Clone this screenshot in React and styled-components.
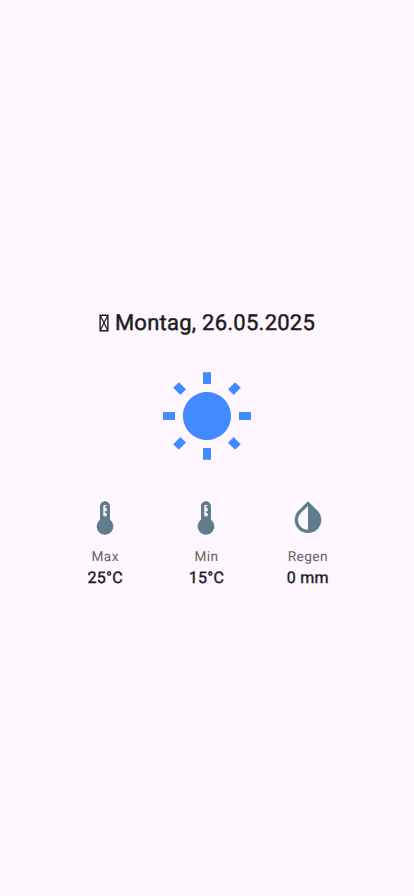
import React from "react";
import styled, { createGlobalStyle } from "styled-components";

const GlobalStyle = createGlobalStyle`
  body { margin: 0; background: #fef7ff; }
`;

const Screen = styled.main`
  box-sizing: border-box;
  height: 896px;
  padding-top: 309px;
  background: #fef7ff;
  color: #1d1b20;
  font-family: Roboto, sans-serif;
  text-rendering: geometricPrecision;
  display: flex;
  flex-direction: column;
  align-items: center;
`;

const Title = styled.h1`
  margin: 0;
  height: 30px;
  display: flex;
  align-items: center;
  gap: 6px;
  font-size: 22px;
  line-height: 30px;
  font-weight: 400;
  -webkit-text-stroke: 0.45px #1d1b20;
  letter-spacing: 0.25px;
  white-space: nowrap;
`;

const MissingGlyph = styled.svg`
  width: 10px;
  height: 18px;
  margin-top: -3px;
  fill: none;
  stroke: #1d1b20;
`;

const Icon = styled.svg`
  display: block;
  width: ${(p) => p.$size}px;
  height: ${(p) => p.$size}px;
  fill: ${(p) => p.$color};
`;

const SunSlot = styled.div`
  margin: 31px 0 32px;
`;

const Readings = styled.section`
  width: 304px;
  margin-left: -1px;
  display: grid;
  grid-template-columns: repeat(3, 1fr);
`;

const Reading = styled.div`
  display: flex;
  flex-direction: column;
  align-items: center;
`;

const Label = styled.span`
  margin-top: 10px;
  font-size: 13.7px;
  line-height: 18px;
  letter-spacing: 0.4px;
  color: #616161;
`;

const Value = styled.span`
  font-size: 16px;
  line-height: 24px;
  font-weight: 400;
  -webkit-text-stroke: 0.4px #1d1b20;
  letter-spacing: 0.25px;
`;

const SUN =
  "M6.76 4.84l-1.8-1.79-1.41 1.41 1.79 1.79 1.42-1.41zM4 10.5H1v2h3v-2zm9-9.95h-2V3.5h2V.55zm7.45 3.91l-1.41-1.41-1.79 1.79 1.41 1.41 1.79-1.79zm-3.21 13.7l1.79 1.8 1.41-1.41-1.8-1.79-1.4 1.4zM20 10.5v2h3v-2h-3zm-8-5c-3.31 0-6 2.69-6 6s2.69 6 6 6 6-2.69 6-6-2.69-6-6-6zm-1 16.95h2V19.5h-2v2.95zm-7.45-3.91l1.41 1.41 1.79-1.8-1.41-1.41-1.79 1.8z";
const THERMOMETER =
  "M15 13V5c0-1.66-1.34-3-3-3S9 3.34 9 5v8c-1.21.91-2 2.37-2 4 0 2.76 2.24 5 5 5s5-2.24 5-5c0-1.63-.79-3.09-2-4zm-4-8c0-.55.45-1 1-1s1 .45 1 1h-1v1h1v2h-1v1h1v2h-2V5z";
const DROP =
  "M12 4.81V19c-3.31 0-6-2.63-6-5.87 0-1.56.62-3.03 1.75-4.14L12 4.81M6.35 7.56C4.9 8.99 4 10.96 4 13.13 4 17.48 7.58 21 12 21c4.42 0 8-3.52 8-7.87 0-2.17-.9-4.14-2.35-5.57L12 2 6.35 7.56z";

const readings = [
  { label: "Max", value: "25°C", path: THERMOMETER },
  { label: "Min", value: "15°C", path: THERMOMETER },
  { label: "Regen", value: "0 mm", path: DROP },
];

export default function App() {
  return (
    <Screen>
      <GlobalStyle />
      <Title>
        <MissingGlyph viewBox="0 0 10 18" aria-hidden="true">
          <path strokeWidth="1.4" d="M1.1 1.3h7.8v15.4H1.1z" />
          <path strokeWidth="1.2" d="M1.5 2l7 14M8.5 2l-7 14" />
        </MissingGlyph>
        <span>Montag, 26.05.2025</span>
      </Title>
      <SunSlot>
        <Icon $size={96} $color="#448aff" viewBox="0 0 24 24">
          <path d={SUN} />
        </Icon>
      </SunSlot>
      <Readings>
        {readings.map((r) => (
          <Reading key={r.label}>
            <Icon $size={40} $color="#607d8b" viewBox="0 0 24 24">
              <path d={r.path} />
            </Icon>
            <Label>{r.label}</Label>
            <Value>{r.value}</Value>
          </Reading>
        ))}
      </Readings>
    </Screen>
  );
}
